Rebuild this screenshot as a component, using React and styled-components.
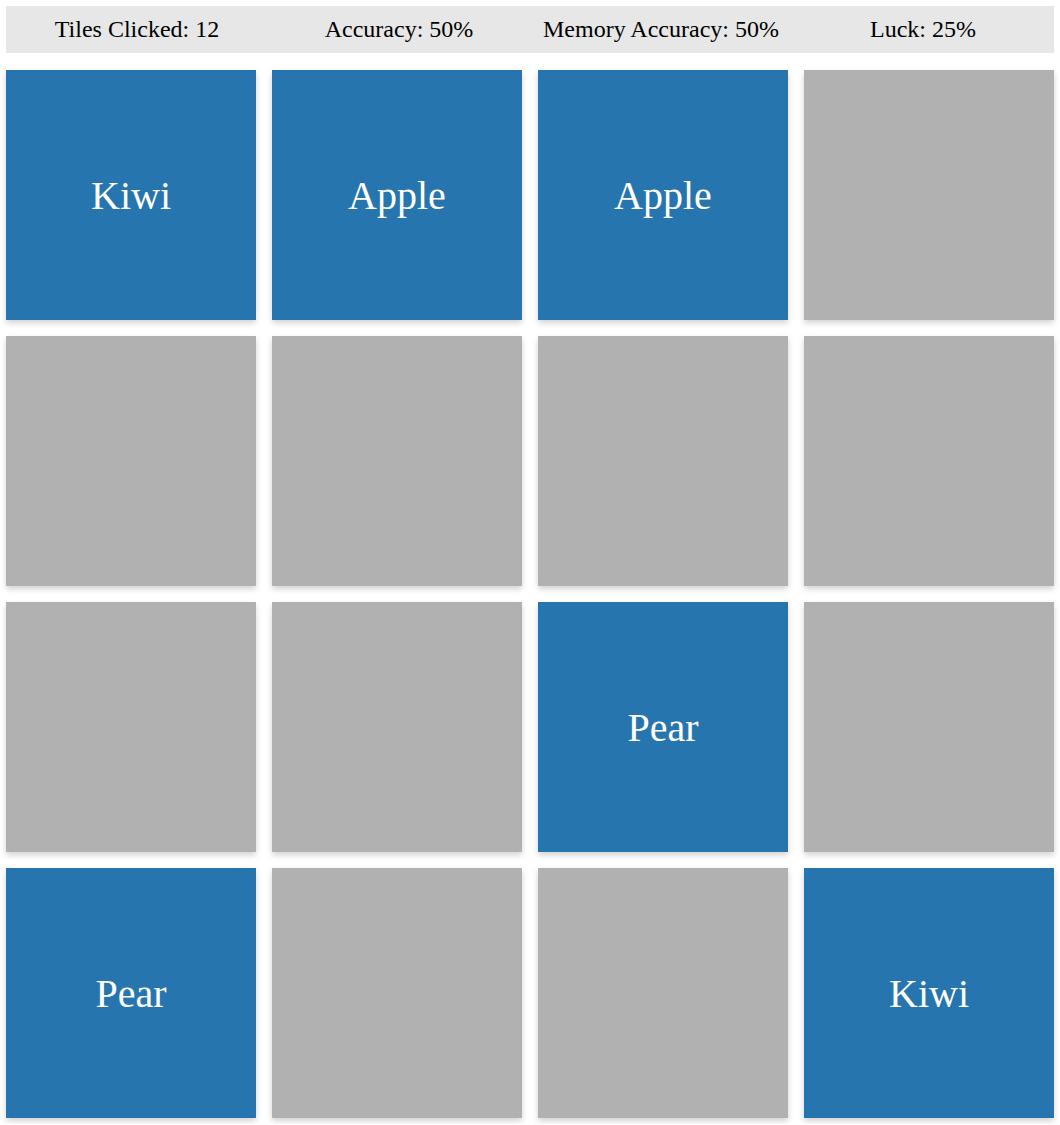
import React from "react";
import styled, { createGlobalStyle } from "styled-components";

const Global = createGlobalStyle`
  html, body { margin: 0; padding: 0; background: #fff; }
  body { font-family: "Liberation Serif", "Times New Roman", serif; }
`;

const Page = styled.div`
  padding: 6px;
  width: 1048px;
`;

const StatsBar = styled.div`
  display: grid;
  grid-template-columns: repeat(4, 1fr);
  align-items: center;
  height: 47px;
  background: #e7e7e7;
  margin-bottom: 17px;
`;

const Stat = styled.div`
  text-align: center;
  font-size: 24px;
  color: #000;
`;

const Board = styled.div`
  display: grid;
  grid-template-columns: repeat(4, 250px);
  grid-auto-rows: 250px;
  gap: 16px;
`;

const Tile = styled.div`
  display: flex;
  align-items: center;
  justify-content: center;
  background: ${(p) => (p.$open ? "#2775ae" : "#b1b1b1")};
  color: #fff;
  font-size: 40px;
  box-shadow: 0 3px 6px rgba(0, 0, 0, 0.18);
`;

const tiles = [
  "Kiwi", "Apple", "Apple", null,
  null, null, null, null,
  null, null, "Pear", null,
  "Pear", null, null, "Kiwi",
];

export default function App() {
  return (
    <>
      <Global />
      <Page>
        <StatsBar>
          <Stat>Tiles Clicked: 12</Stat>
          <Stat>Accuracy: 50%</Stat>
          <Stat>Memory Accuracy: 50%</Stat>
          <Stat>Luck: 25%</Stat>
        </StatsBar>
        <Board>
          {tiles.map((t, i) => (
            <Tile key={i} $open={!!t}>
              {t}
            </Tile>
          ))}
        </Board>
      </Page>
    </>
  );
}
